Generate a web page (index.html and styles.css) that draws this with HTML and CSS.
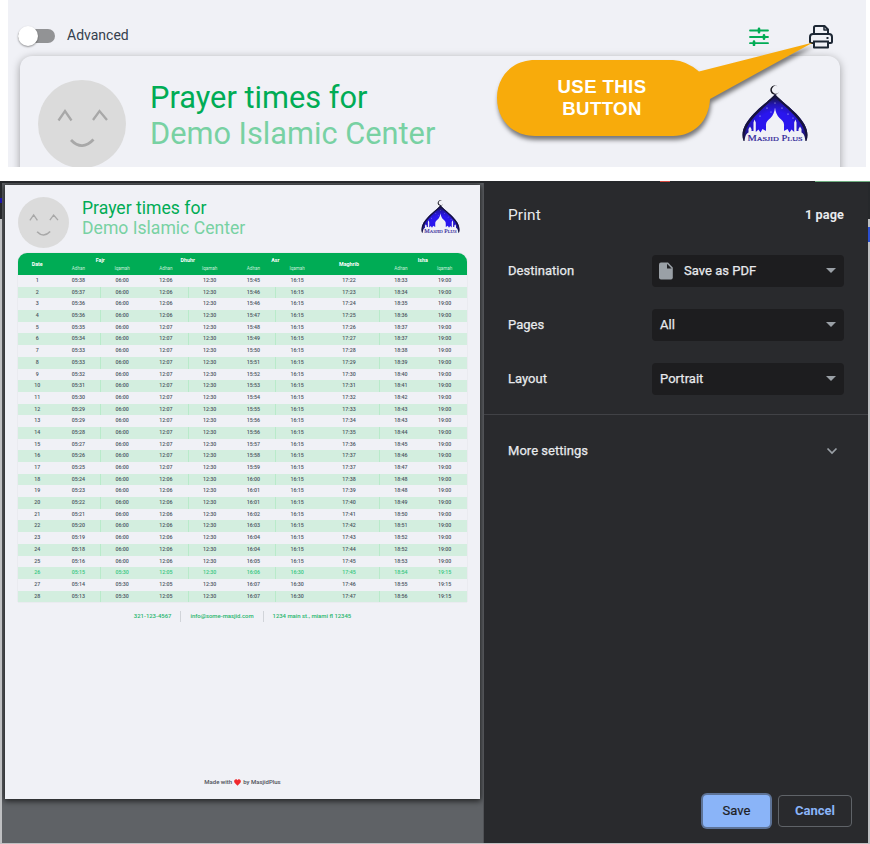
FILE: index.html
```
<!DOCTYPE html>
<html lang="en">
<head>
<meta charset="utf-8">
<title>Prayer times</title>
<link rel="stylesheet" href="styles.css">
</head>
<body>
<svg class="defs" width="0" height="0" aria-hidden="true">
  <defs>
    <radialGradient id="sky" cx="50%" cy="64%" r="58%">
      <stop offset="0.45" stop-color="#2a16ee"/>
      <stop offset="0.72" stop-color="#2315b4"/>
      <stop offset="1" stop-color="#17143f"/>
    </radialGradient>
    <symbol id="logo" viewBox="0 0 66 58">
      <path d="M35.500 1.200A4.600 4.600 0 1 0 37.300 6.600A3.900 3.900 0 1 1 35.500 1.200Z" fill="#17161f"/>
      <path d="M33 9C34.500 12 45 19.500 54 28.500C63 38 67.500 46 64.500 56H1.500C-1.500 46 3 38 12 28.500C21 19.500 31.500 12 33 9Z" fill="url(#sky)"/>
      <path d="M33 9C34.500 12 45 19.500 54 28.500C63 38 67.500 46 64.500 56C64 46 60.500 39 52.500 30.500C44 21.500 35.500 15 33 11.500C30.500 15 22 21.500 13.500 30.500C5.500 39 2 46 1.500 56C-1.500 46 3 38 12 28.500C21 19.500 31.500 12 33 9Z" fill="#17143b"/>
      <path d="M2.500 57C3 51 4 49 6.500 47.500V44L8 41.500L9.500 44V46H11.500V37.500L12.500 34.500L13.800 37.500V47L16.500 44.500L18.500 47.500L20.500 44L24 46V41C23.500 37 26 35 28.500 33C31 30.500 32.500 27 33 22.500C33.500 27 35 30.500 37.500 33C40 35 42.500 37 42 41V46L45.500 44L47.500 47.500L49.500 44.500L52.200 47V37.500L53.500 34.500L54.500 37.500V46H56.500V44L58 41.500L59.500 44V47.500C62 49 63 51 63.500 57V58H2.500Z" fill="#f0f1f6"/>
      <g fill="#dfe0ff"><circle cx="25" cy="23" r=".6"/><circle cx="40" cy="23" r=".6"/><circle cx="18" cy="31" r=".6"/><circle cx="46" cy="29" r=".6"/><circle cx="29" cy="27" r=".5"/><circle cx="51" cy="33" r=".5"/><circle cx="33" cy="18" r=".5"/></g>
      <text x="5.500" y="55.500" textLength="55" lengthAdjust="spacingAndGlyphs" class="logo-text">M<tspan font-size="7">ASJID</tspan> P<tspan font-size="7">LUS</tspan></text>
    </symbol>
    <symbol id="face" viewBox="0 0 88 88">
      <circle cx="44" cy="44" r="44" fill="#dbdbdb"/>
      <path d="M20.500 40.500L27 31L33.500 40.500M55 40L61.500 31L69 40" fill="none" stroke="#a8a8a8" stroke-width="2.300"/>
      <path d="M33 60Q44 71.500 55.500 59.500" fill="none" stroke="#a8a8a8" stroke-width="2.800"/>
    </symbol>
  </defs>
</svg>

<section class="app">
  <div class="toolbar">
    <span class="switch"><span class="thumb"></span></span>
    <span class="switch-label">Advanced</span>
    <svg class="sliders" width="20" height="19" viewBox="0 0 20 19" fill="none" stroke="#00ac55" stroke-width="1.800" stroke-linecap="round"><path d="M1 3.500H19M1 10H19M1 16.200H19"/><path d="M10 1.800V5.200M15 8.300V11.700M5 14.500V17.900" stroke-width="2.600"/></svg>
    <svg class="printer" width="24" height="24" viewBox="0 0 24 24" fill="none" stroke="#1d2734" stroke-width="2" stroke-linejoin="round"><path d="M5 9V2.500Q5 1 6.500 1H15.500L19 4.500V9"/><path d="M15 1.500V5H18.500" stroke-width="1.500"/><path d="M5 18H2.500Q1 18 1 16.500V12Q1 9 4 9H20Q23 9 23 12V16.500Q23 18 21.500 18H19"/><path d="M4 16.500H20M5 17V22.500H19V17"/><path d="M17.500 13H19.500"/></svg>
  </div>
  <div class="card">
    <svg class="avatar" viewBox="0 0 88 88"><use href="#face"/></svg>
    <div class="titles"><div class="t1">Prayer times for</div><div class="t2">Demo Islamic Center</div></div>
    <svg class="logo" viewBox="0 0 66 58"><use href="#logo"/></svg>
  </div>
  <div class="callout">
    <svg width="350" height="110" viewBox="0 0 350 110"><path d="M54 25H192Q206 26 218 36.500L332 7.500L229 64C228 86 213 101 192 101H54C31 101 16 84 16 63C16 42 31 25 54 25Z" fill="#f8ab0b"/></svg>
    <div class="callout-text">USE THIS<br>BUTTON</div>
  </div>
</section>

<section class="backdrop">
  <div class="dialog">
    <div class="preview">
      <div class="page">
        <header class="page-head">
          <svg class="avatar" viewBox="0 0 88 88"><use href="#face"/></svg>
          <div class="titles"><div class="t1">Prayer times for</div><div class="t2">Demo Islamic Center</div></div>
          <svg class="logo" viewBox="0 0 66 58"><use href="#logo"/></svg>
        </header>
        <div class="table">
          <div class="thead">
            <b class="date">Date</b><b class="pair">Fajr</b><b class="pair">Dhuhr</b><b class="pair">Asr</b><b class="maghrib">Maghrib</b><b class="pair">Isha</b>
            <i class="after-date">Adhan</i><i>Iqamah</i><i>Adhan</i><i>Iqamah</i><i>Adhan</i><i>Iqamah</i><i class="after-maghrib">Adhan</i><i>Iqamah</i>
          </div>
          <div class="tbody" id="rows"></div>
        </div>
        <div class="contact"><span>321-123-4567</span><span>info@some-masjid.com</span><span>1234 main st., miami fl 12345</span></div>
        <div class="made">Made with <svg width="7" height="7" viewBox="0 0 14 13"><path d="M7 13L1.200 6.800C-1 4 1 0 4 0C5.500 0 6.500 1 7 2C7.500 1 8.500 0 10 0C13 0 15 4 12.800 6.800Z" fill="#f0282d"/></svg> by MasjidPlus</div>
      </div>
    </div>
    <aside class="settings">
      <div class="summary"><span class="heading">Print</span><span class="count">1 page</span></div>
      <div class="field"><label>Destination</label><div class="select"><svg class="file" width="14" height="18" viewBox="0 0 14 18"><path d="M2 0.500H9L13.800 5.500V15.500Q13.800 17.500 12 17.500H2Q0 17.500 0 15.500V2.500Q0 .5 2 .5Z" fill="#9aa0a6"/><path d="M8 1.800V6.500H12.700Z" fill="#202124"/></svg><span>Save as PDF</span><em></em></div></div>
      <div class="field"><label>Pages</label><div class="select"><span>All</span><em></em></div></div>
      <div class="field"><label>Layout</label><div class="select"><span>Portrait</span><em></em></div></div>
      <div class="more"><span>More settings</span><svg width="12" height="8" viewBox="0 0 12 8"><path d="M1.500 1.500L6 6L10.500 1.500" fill="none" stroke="#9aa0a6" stroke-width="1.700"/></svg></div>
      <div class="actions"><button class="save">Save</button><button class="cancel">Cancel</button></div>
    </aside>
  </div>
</section>
<script src="rows.js"></script>
</body>
</html>
```
FILE: styles.css
```
* { box-sizing: border-box; }
body { margin: 0; width: 870px; height: 844px; overflow: hidden; background: #fff; font-family: Roboto, sans-serif; display: flex; flex-direction: column; gap: 14px; }
svg { display: block; flex: none; }
.defs { position: absolute; }
.logo-text { font: 9px "Liberation Serif", serif; fill: #2c2396; stroke: #2c2396; stroke-width: .2; }

.app { position: relative; flex: none; height: 167px; margin: 0 4px 0 8px; background: #f0f1f6; overflow: hidden; }
.toolbar { height: 56px; display: flex; align-items: flex-start; padding: 25px 33.500px 0 10px; }
.switch { width: 37px; height: 14px; margin-top: 4px; border-radius: 7px; background: #929395; display: flex; align-items: center; }
.thumb { width: 20px; height: 20px; border-radius: 50%; background: #fff; box-shadow: 0 1px 2px rgba(0,0,0,.4); flex: none; }
.switch-label { margin: 1px auto 0 12px; font-size: 14px; line-height: 18px; color: #35404d; }
.sliders { margin: 2px 39.500px 0 0; }
.card { height: 140px; margin: 0 26px 0 12px; border-radius: 12px; background: #f0f1f6; box-shadow: 0 2px 8px rgba(0,0,0,.35); display: flex; padding: 24px 32px 0 18px; }
.card .avatar { width: 88px; height: 88px; }
.card .titles { margin: 0 auto 0 24px; font-size: 30.750px; line-height: 36px; }
.card .logo { width: 66px; height: 58px; margin-top: 5px; }
.titles { white-space: nowrap; }
.t1 { color: #00ac55; }
.t2 { color: #78d1a3; }
.callout { position: absolute; left: 473px; top: 35px; }
.callout svg { filter: drop-shadow(1px 4px 2px rgba(0,0,0,.5)); }
.callout-text { position: absolute; left: 21px; top: 41px; width: 200px; text-align: center; color: #fff; font: bold 18.600px/22px "Liberation Sans", sans-serif; letter-spacing: .4px; }

.backdrop { flex: 1; min-height: 0; padding: 2px 2px 1px; background:
  linear-gradient(#d5493f, #d5493f) 660px 0 / 10px 1px no-repeat,
  linear-gradient(#6fae80, #6fae80) 815px 0 / 55px 1px no-repeat,
  linear-gradient(#2b4fd0, #2b4fd0) 868px 46px / 2px 15px no-repeat,
  linear-gradient(#1d14a8, #1d14a8) 0 17px / 2px 5px no-repeat,
  linear-gradient(#26282b 38px, #bfc0c2 38px); }
.dialog { height: 660px; display: flex; background: #292a2d; }
.preview { width: 482px; padding: 2px 3px 0; background: #5f6266; border-right: 1px solid #505256; overflow: hidden; }
.page { width: 475px; height: 614px; padding: 12px 13px 0; background: #f0f1f6; box-shadow: 0 1px 6px 1px rgba(0,0,0,.7); display: flex; flex-direction: column; }
.page-head { display: flex; height: 56px; flex: none; padding-right: 7px; }
.page-head .avatar { width: 51px; height: 51px; }
.page-head .titles { margin: 1px auto 0 13px; font-size: 17.600px; line-height: 20px; }
.page-head .logo { width: 39px; height: 34px; margin-top: 3px; }
.table { width: 449px; flex: none; font-size: 5.3px; border-radius: 9px 9px 0 0; box-shadow: 0 0 1px rgba(0,0,0,.25); }
.thead, .row { display: grid; grid-template-columns: 38.500px repeat(6, 43.750px) 60px repeat(2, 43.750px); text-align: center; align-items: center; }
.thead { height: 22px; grid-template-rows: 14px 8px; background: #00ac55; color: #fff; border-radius: 9px 9px 0 0; }
.thead b { font-weight: 700; line-height: 14px; }
.thead i { font-style: normal; font-size: 4.600px; line-height: 8px; margin-top: -5px; color: #c8eeda; height: 8px; }
.pair { grid-column: span 2; }
.date, .maghrib { grid-row: span 2; }
.after-date { grid-column: 2; }
.after-maghrib { grid-column: 9; }
.row { height: 11.690px; font-weight: 500; line-height: 11.690px; color: #4d5662; }
.row:nth-child(even) { background: #d3eedf; }
.row span { height: 11.690px; }
.row:nth-child(even) span:nth-child(3), .row:nth-child(even) span:nth-child(5), .row:nth-child(even) span:nth-child(7), .row:nth-child(even) span:nth-child(9) { box-shadow: inset 1px 0 #b9eaca; }
.row.today { color: #37c681; }
.contact { display: flex; justify-content: center; margin-top: 8.500px; font-size: 5.920px; line-height: 11px; font-weight: 500; color: #27b66d; white-space: nowrap; }
.contact span { padding: 0 9px; }
.contact span + span { border-left: 1px solid #d1d4d9; }
.made { margin: auto 0 12px; display: flex; gap: 2px; justify-content: center; align-items: center; font-size: 6px; line-height: 10px; font-weight: 500; color: #4d5058; }

.settings { flex: 1; display: flex; flex-direction: column; color: #e8eaed; font-size: 13px; font-weight: 400; letter-spacing: .03px; }
.summary { display: flex; justify-content: space-between; align-items: center; height: 61px; margin-bottom: 11px; padding: 1px 24px 0 24px; }
.heading { font-size: 15.400px; font-weight: 400; margin-top: 1px; letter-spacing: .15px; }
.count { font-weight: 700; font-size: 12.700px; letter-spacing: .1px; }
.field { display: flex; align-items: center; height: 32px; margin-bottom: 22px; padding: 0 24px 0 24px; }
.field label { width: 144px; }
.field label, .select span, .more span { padding-bottom: 2px; -webkit-text-stroke: .25px currentColor; }
.select { width: 192px; height: 32px; display: flex; align-items: center; border-radius: 4px; background: #1d1d1f; padding: 0 8px; }
.select .file { margin: 0 11px 0 -1px; }
.select em { margin: -2px 0 0 auto; border: 5px solid transparent; border-top-color: #9aa0a6; border-bottom: 0; }
.more { display: flex; justify-content: space-between; align-items: center; height: 73px; border-top: 1px solid #414246; margin-top: -3px; padding: 0 30px 0 24px; }
.actions { display: flex; justify-content: flex-end; margin-top: auto; gap: 8px; padding: 0 16px 16px 0; }
button { height: 32px; font: 500 13px Roboto, sans-serif; border-radius: 4px; padding: 0 0 2px; }
.save { width: 67px; background: #8ab4f8; border: 0; color: #202124; font-weight: 400; letter-spacing: .1px; -webkit-text-stroke: .2px currentColor; box-shadow: 0 0 0 2px #5d7397; }
.cancel { width: 74px; background: transparent; border: 1px solid #5f6368; color: #8ab4f8; font-weight: 700; }
```
FILE: rows.js
```
const fajr = "05:38 05:37 05:36 05:36 05:35 05:34 05:33 05:33 05:32 05:31 05:30 05:29 05:29 05:28 05:27 05:26 05:25 05:24 05:23 05:22 05:21 05:20 05:19 05:18 05:16 05:15 05:14 05:13".split(" ");
const asr = "15:45 15:46 15:46 15:47 15:48 15:49 15:50 15:51 15:52 15:53 15:54 15:55 15:56 15:56 15:57 15:58 15:59 16:00 16:01 16:01 16:02 16:03 16:04 16:04 16:05 16:06 16:07 16:07".split(" ");
const maghrib = "17:22 17:23 17:24 17:25 17:26 17:27 17:28 17:29 17:30 17:31 17:32 17:33 17:34 17:35 17:36 17:37 17:37 17:38 17:39 17:40 17:41 17:42 17:43 17:44 17:45 17:45 17:46 17:47".split(" ");
const isha = "18:33 18:34 18:35 18:36 18:37 18:37 18:38 18:39 18:40 18:41 18:42 18:43 18:43 18:44 18:45 18:46 18:47 18:48 18:48 18:49 18:50 18:51 18:52 18:52 18:53 18:54 18:55 18:56".split(" ");
document.getElementById("rows").innerHTML = fajr.map((time, i) => {
  const day = i + 1;
  const late = day >= 26;
  const dhuhr = late ? "12:05" : day >= 5 && day <= 17 ? "12:07" : "12:06";
  const cells = [day, time, late ? "05:30" : "06:00", dhuhr, "12:30", asr[i], late ? "16:30" : "16:15", maghrib[i], isha[i], late ? "19:15" : "19:00"];
  return `<div class="row${day === 26 ? " today" : ""}">${cells.map(c => `<span>${c}</span>`).join("")}</div>`;
}).join("");
```
